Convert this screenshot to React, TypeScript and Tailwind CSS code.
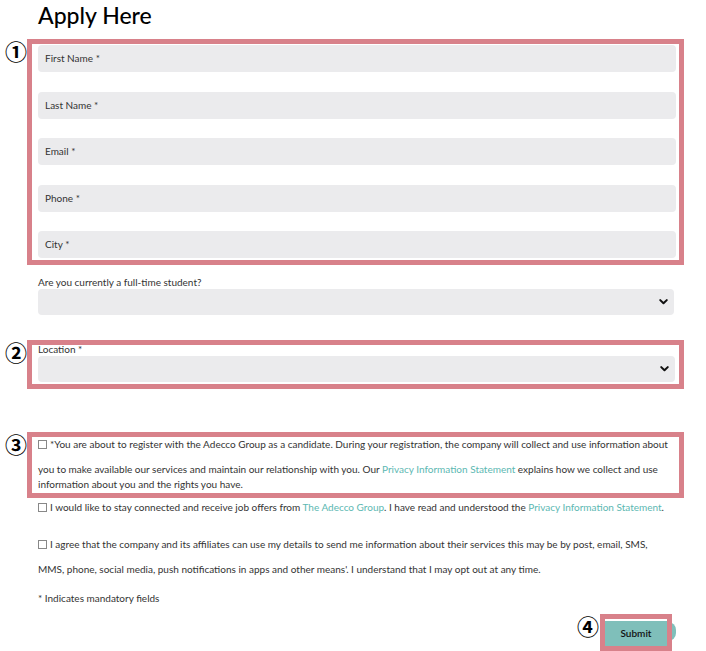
import React from "react";

const Chevron = () => (
  <svg width="9" height="6" viewBox="0 0 10 7" className="absolute right-[6px] top-1/2 -translate-y-1/2">
    <path d="M1.2 1.3 L5 5 L8.8 1.3" fill="none" stroke="#111" strokeWidth="2.4" strokeLinecap="round" strokeLinejoin="round" />
  </svg>
);

const Mark = ({ n, className }: { n: string; className: string }) => (
  <span
    className={`absolute text-[22px] font-bold leading-none text-black ${className}`}
    style={{ fontFamily: '"Noto Sans CJK JP", "DejaVu Sans", sans-serif' }}
  >
    {n}
  </span>
);

const Field = ({ label }: { label: string }) => (
  <div className="h-[27px] w-full rounded-[4px] bg-[#ebebed] pl-[7px] flex items-center text-[10px] text-[#333]">
    {label}
  </div>
);

const Select = () => (
  <div className="relative h-[26px] w-full rounded-[4px] bg-[#ebebed]">
    <Chevron />
  </div>
);

const Box = () => (
  <span className="inline-block align-[-1px] w-[9px] h-[9px] border border-[#888] bg-white mr-[3px]" />
);

const Link = ({ children }: { children: React.ReactNode }) => (
  <span className="text-[#5cb8b2]">{children}</span>
);

export default function App() {
  return (
    <div
      className="w-[706px] h-[651px] bg-white pl-[27px] pr-[22px] overflow-hidden text-[#333]"
      style={{ fontFamily: "Lato, 'Liberation Sans', sans-serif" }}
    >
      <h1 className="h-[39px] pl-[11px] pt-[1px] text-[23px] leading-[28px] font-medium text-black">
        Apply Here
      </h1>

      <div className="relative border-[5px] border-[#d8818a] pl-[6px] pr-[3px] pt-[1px] pb-[2px] flex flex-col gap-[19.5px]">
        <Mark n="①" className="-left-[27px] -top-[5px]" />
        <Field label="First Name *" />
        <Field label="Last Name *" />
        <Field label="Email *" />
        <Field label="Phone *" />
        <Field label="City *" />
      </div>

      <div className="mt-[11px] pl-[11px] pr-[10px]">
        <div className="h-[13px] text-[10px] leading-[13px]">Are you currently a full-time student?</div>
        <Select />
      </div>

      <div className="relative mt-[25px] border-[5px] border-[#d8818a] pl-[6px] pr-[4px] pb-[2px]">
        <Mark n="②" className="-left-[27px] -top-[5px]" />
        <div className="h-[11px] text-[10px] leading-[9px]">Location *</div>
        <Select />
      </div>

      <div className="relative mt-[43px] border-[5px] border-[#d8818a] pl-[6px] pb-[1px] text-[10px] leading-[15px] whitespace-nowrap">
        <Mark n="③" className="-left-[27px] -top-[5px]" />
        <div>
          <Box />
          *You are about to register with the Adecco Group as a candidate. During your registration, the company will collect and use information about
        </div>
        <div className="mt-[10px]">
          you to make available our services and maintain our relationship with you. Our <Link>Privacy Information Statement</Link> explains how we collect and use
        </div>
        <div>information about you and the rights you have.</div>
      </div>

      <div className="pl-[11px] text-[10px] leading-[15px] whitespace-nowrap">
        <div className="mt-[2px]">
          <Box />
          I would like to stay connected and receive job offers from <Link>The Adecco Group</Link>. I have read and understood the <Link>Privacy Information Statement</Link>.
        </div>
        <div className="mt-[22px]">
          <Box />
          I agree that the company and its affiliates can use my details to send me information about their services this may be by post, email, SMS,
        </div>
        <div className="mt-[10px]">
          MMS, phone, social media, push notifications in apps and other means'. I understand that I may opt out at any time.
        </div>
        <div className="mt-[14px]">* Indicates mandatory fields</div>
      </div>

      <div className="mt-[8px] flex justify-end pr-[12px]">
        <div className="relative">
          <Mark n="④" className="-left-[23px] top-[0px]" />
          <span className="absolute -right-[4px] top-[8px] h-[19px] w-[8px] rounded-r-full bg-[#7fbfba]" />
          <div className="relative border-[5px] border-[#d8818a]">
            <button className="h-[25px] w-[62px] bg-[#7fbfba] text-[10px] font-semibold text-[#111]">
              Submit
            </button>
          </div>
        </div>
      </div>
    </div>
  );
}
